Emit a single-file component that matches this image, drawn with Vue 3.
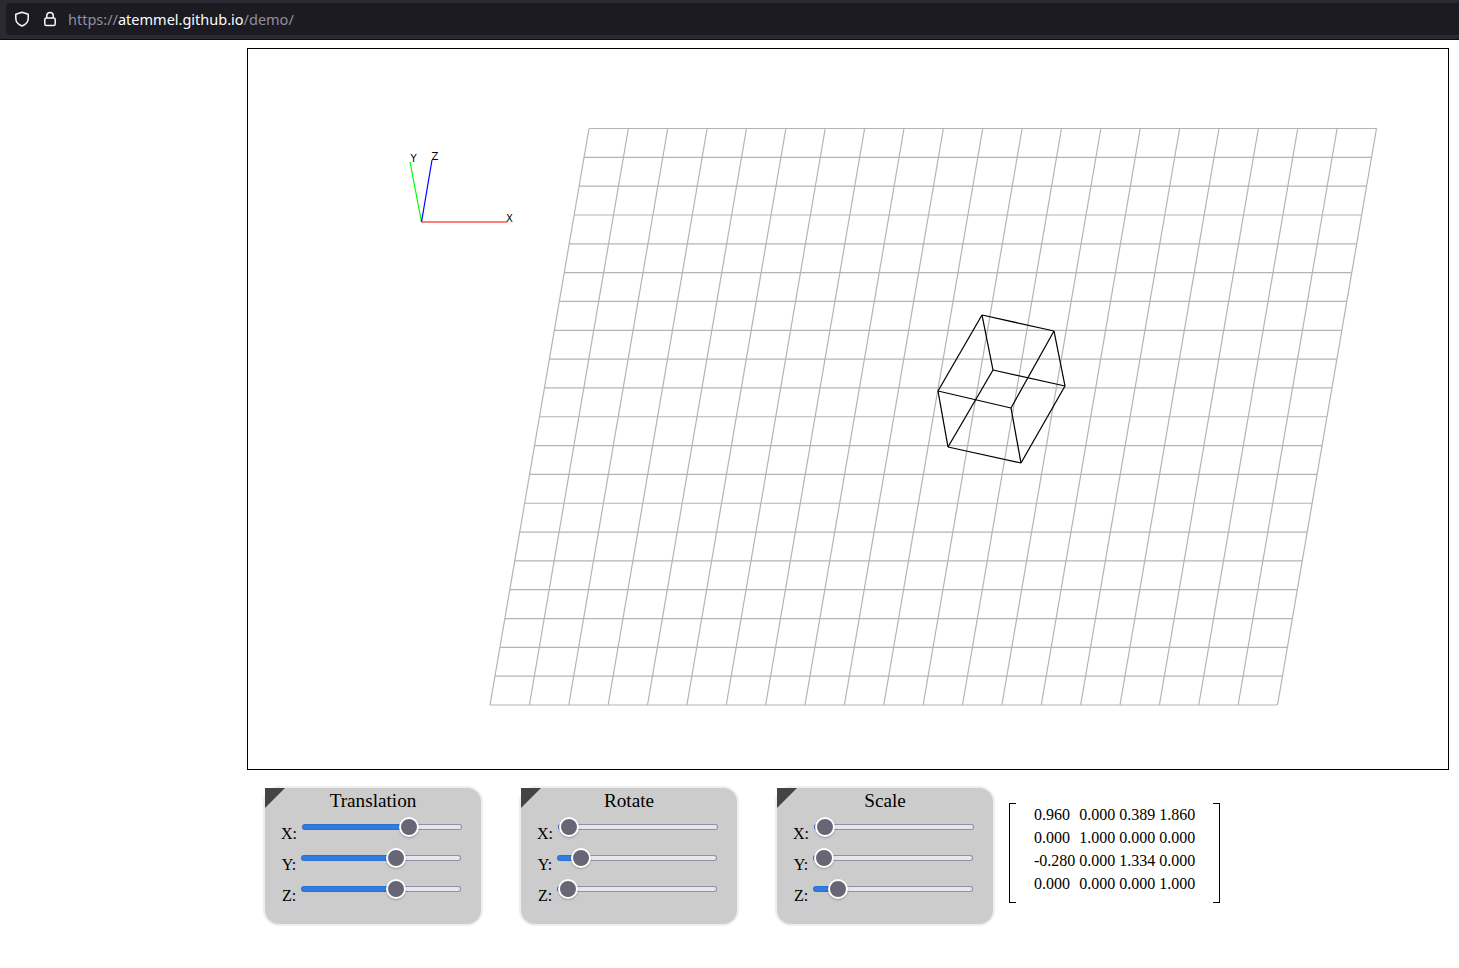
<script setup>
import { ref, computed } from 'vue'

// grid corners and cube points are in page pixels, the svg is moved by the canvas offset
const canvasLeft = 248
const canvasTop = 49
const cells = 20
const gridTL = [589, 128.5]
const gridTR = [1376.5, 128.5]
const gridBL = [490, 705]

const lerp = (a, b, t) => a + (b - a) * t
const toLocal = (x, y) => [x - canvasLeft, y - canvasTop]

const gridLines = computed(() => {
  const lines = []
  for (let i = 0; i <= cells; i++) {
    const t = i / cells
    // rows
    const [ax, ay] = toLocal(lerp(gridTL[0], gridBL[0], t), lerp(gridTL[1], gridBL[1], t))
    lines.push([ax, ay, ax + (gridTR[0] - gridTL[0]), ay])
    // columns
    const [bx, by] = toLocal(lerp(gridTL[0], gridTR[0], t), gridTL[1])
    lines.push([bx, by, bx + (gridBL[0] - gridTL[0]), by + (gridBL[1] - gridTL[1])])
  }
  return lines
})

const cubePoints = [
  [982, 315], [1054, 331], [1065, 386], [993, 370],
  [938, 391], [1011, 408], [1021, 463], [948, 447]
]
const cubeEdges = [
  [0, 1], [1, 2], [2, 3], [3, 0],
  [4, 5], [5, 6], [6, 7], [7, 4],
  [0, 4], [1, 5], [2, 6], [3, 7]
]
const cubeLines = cubeEdges.map(([a, b]) => [
  ...toLocal(...cubePoints[a]),
  ...toLocal(...cubePoints[b])
])

const origin = toLocal(421.5, 222)
const axes = [
  { name: 'X', color: '#ff0000', end: toLocal(507, 222), text: toLocal(506, 222) },
  { name: 'Y', color: '#00ff00', end: toLocal(410, 162), text: toLocal(410.5, 162) },
  { name: 'Z', color: '#0000ff', end: toLocal(432, 160), text: toLocal(431.5, 160) }
]

const panels = ref([
  { title: 'Translation', values: { X: 69.7, Y: 60.5, Z: 60.5 } },
  { title: 'Rotate', values: { X: 0, Y: 9, Z: 0 } },
  { title: 'Scale', values: { X: 0, Y: 0, Z: 10 } }
])

// thumb centre runs from 10px to 150px on the 160px track
const fillStyle = (v) => ({ '--fill': `${10 + v * 1.4}px` })

const matrix = [
  ['0.960', '0.000', '0.389', '1.860'],
  ['0.000', '1.000', '0.000', '0.000'],
  ['-0.280', '0.000', '1.334', '0.000'],
  ['0.000', '0.000', '0.000', '1.000']
]
</script>

<template>
  <div class="toolbar">
    <div class="urlbar">
      <svg class="icon" viewBox="0 0 16 16" width="16" height="16">
        <path d="M8 1.2 L14.2 3.2 V7.6 C14.2 11.2 11.6 13.7 8 15 C4.4 13.7 1.8 11.2 1.8 7.6 V3.2 Z" fill="none" stroke="#fbfbfe" stroke-width="1.5" stroke-linejoin="round" />
      </svg>
      <svg class="icon lock" viewBox="0 0 16 16" width="16" height="16">
        <path d="M4.8 7 V4.6 C4.8 2.7 6.2 1.5 8 1.5 C9.8 1.5 11.2 2.7 11.2 4.6 V7" fill="none" stroke="#fbfbfe" stroke-width="1.5" />
        <rect x="2.8" y="7" width="10.4" height="7.6" rx="1.6" fill="none" stroke="#fbfbfe" stroke-width="1.5" />
      </svg>
      <span class="url"><span class="dim">https://</span>atemmel.github.io<span class="dim">/demo/</span></span>
    </div>
  </div>

  <main class="page">
    <div class="canvas">
      <svg width="1200" height="720">
        <line
          v-for="(l, i) in gridLines"
          :key="'g' + i"
          :x1="l[0]" :y1="l[1]" :x2="l[2]" :y2="l[3]"
          stroke="#b4b4b4"
          stroke-width="1.2"
        />
        <line
          v-for="(l, i) in cubeLines"
          :key="'c' + i"
          :x1="l[0]" :y1="l[1]" :x2="l[2]" :y2="l[3]"
          stroke="#000000"
          stroke-width="1.25"
        />
        <g v-for="a in axes" :key="a.name">
          <line :x1="origin[0]" :y1="origin[1]" :x2="a.end[0]" :y2="a.end[1]" :stroke="a.color" stroke-width="1.2" />
          <text :x="a.text[0]" :y="a.text[1]" class="axis-label">{{ a.name }}</text>
        </g>
      </svg>
    </div>

    <div class="controls">
      <section v-for="p in panels" :key="p.title" class="panel">
        <h3 class="panel-title">{{ p.title }}</h3>
        <div v-for="(v, axis) in p.values" :key="axis" class="row">
          <label class="row-label">{{ axis }}:</label>
          <input
            v-model.number="p.values[axis]"
            class="slider"
            type="range"
            min="0"
            max="100"
            step="0.1"
            :style="fillStyle(v)"
          />
        </div>
      </section>

      <div class="matrix">
        <template v-for="(r, i) in matrix" :key="i">
          <span v-for="(c, j) in r" :key="j">{{ c }}</span>
        </template>
      </div>
    </div>
  </main>
</template>

<style scoped>
.toolbar {
  height: 40px;
  box-sizing: border-box;
  padding: 3px 0 5px 6px;
  background: #2b2a33;
  border-bottom: 1px solid #0c0c0d;
}

.urlbar {
  display: flex;
  align-items: center;
  height: 32px;
  padding-left: 8px;
  background: #1c1b22;
  border-radius: 4px 0 0 4px;
  font-family: "Noto Sans", sans-serif;
  font-size: 14.5px;
  color: #fbfbfe;
}

.icon {
  flex: none;
}

.lock {
  margin-left: 12px;
}

.url {
  margin-left: 10px;
}

.dim {
  color: #8f8f9d;
}

.page {
  padding: 8px 0 0 247px;
  font-family: "Liberation Serif", "Times New Roman", serif;
  font-size: 16px;
  color: #000;
}

.canvas {
  width: 1200px;
  height: 720px;
  border: 1px solid #000;
}

.canvas svg {
  display: block;
}

.axis-label {
  font-family: "DejaVu Sans", sans-serif;
  font-size: 10px;
  fill: #000;
}

.controls {
  display: flex;
  align-items: flex-start;
  margin-top: 16px;
  padding-left: 16px;
}

.panel {
  position: relative;
  box-sizing: border-box;
  width: 220px;
  height: 140px;
  margin-right: 36px;
  padding-top: 2px;
  background: #cccccc;
  border: 2px solid #eeeeee;
  border-radius: 16px;
}

.panel:nth-child(3) {
  margin-right: 14px;
}

/* dark corner */
.panel::before {
  content: "";
  position: absolute;
  top: 0;
  left: 0;
  border-top: 20px solid #444444;
  border-right: 20px solid transparent;
}

.panel-title {
  margin: 0 0 5px;
  font-size: 19.2px;
  font-weight: normal;
  line-height: 22px;
  text-align: center;
}

.row {
  display: flex;
  justify-content: center;
  height: 31px;
  padding-right: 3px;
}

.row-label {
  margin: 8px 5px 0 0;
}

.slider {
  -webkit-appearance: none;
  appearance: none;
  width: 160px;
  height: 20px;
  margin: 0;
  padding: 0;
  background: transparent;
}

/* the border colour follows the fill too, so both layers use --fill */
.slider::-webkit-slider-runnable-track {
  box-sizing: border-box;
  height: 6px;
  background:
    linear-gradient(to right, #2f7de1 var(--fill), #e6e6ee var(--fill)) padding-box,
    linear-gradient(to right, #2a70cc var(--fill), #8f8fa6 var(--fill)) border-box;
  border: 1px solid transparent;
  border-radius: 3px;
}

.slider::-webkit-slider-thumb {
  -webkit-appearance: none;
  box-sizing: border-box;
  width: 20px;
  height: 20px;
  margin-top: -8px;
  background: #666675;
  border: 2px solid #ffffff;
  border-radius: 50%;
  box-shadow: 0 1px 2px rgba(0, 0, 0, 0.25);
}

.slider::-moz-range-track {
  box-sizing: border-box;
  height: 6px;
  background: linear-gradient(to right, #2f7de1 var(--fill), #e6e6ee var(--fill));
  border: 1px solid #8f8fa6;
  border-radius: 3px;
}

.slider::-moz-range-thumb {
  box-sizing: border-box;
  width: 20px;
  height: 20px;
  background: #666675;
  border: 2px solid #ffffff;
  border-radius: 50%;
}

.matrix {
  position: relative;
  display: grid;
  grid-template-columns: repeat(4, auto);
  grid-auto-rows: 23px;
  column-gap: 4px;
  align-items: center;
  margin-top: 17px;
  padding: 0 25px 8px;
}

/* square brackets */
.matrix::before,
.matrix::after {
  content: "";
  position: absolute;
  top: 0;
  bottom: 0;
  width: 6px;
  border-top: 1px solid #000;
  border-bottom: 1px solid #000;
}

.matrix::before {
  left: 0;
  border-left: 1px solid #000;
}

.matrix::after {
  right: 0;
  border-right: 1px solid #000;
}
</style>

<style>
html,
body {
  background: #fff;
}
</style>
